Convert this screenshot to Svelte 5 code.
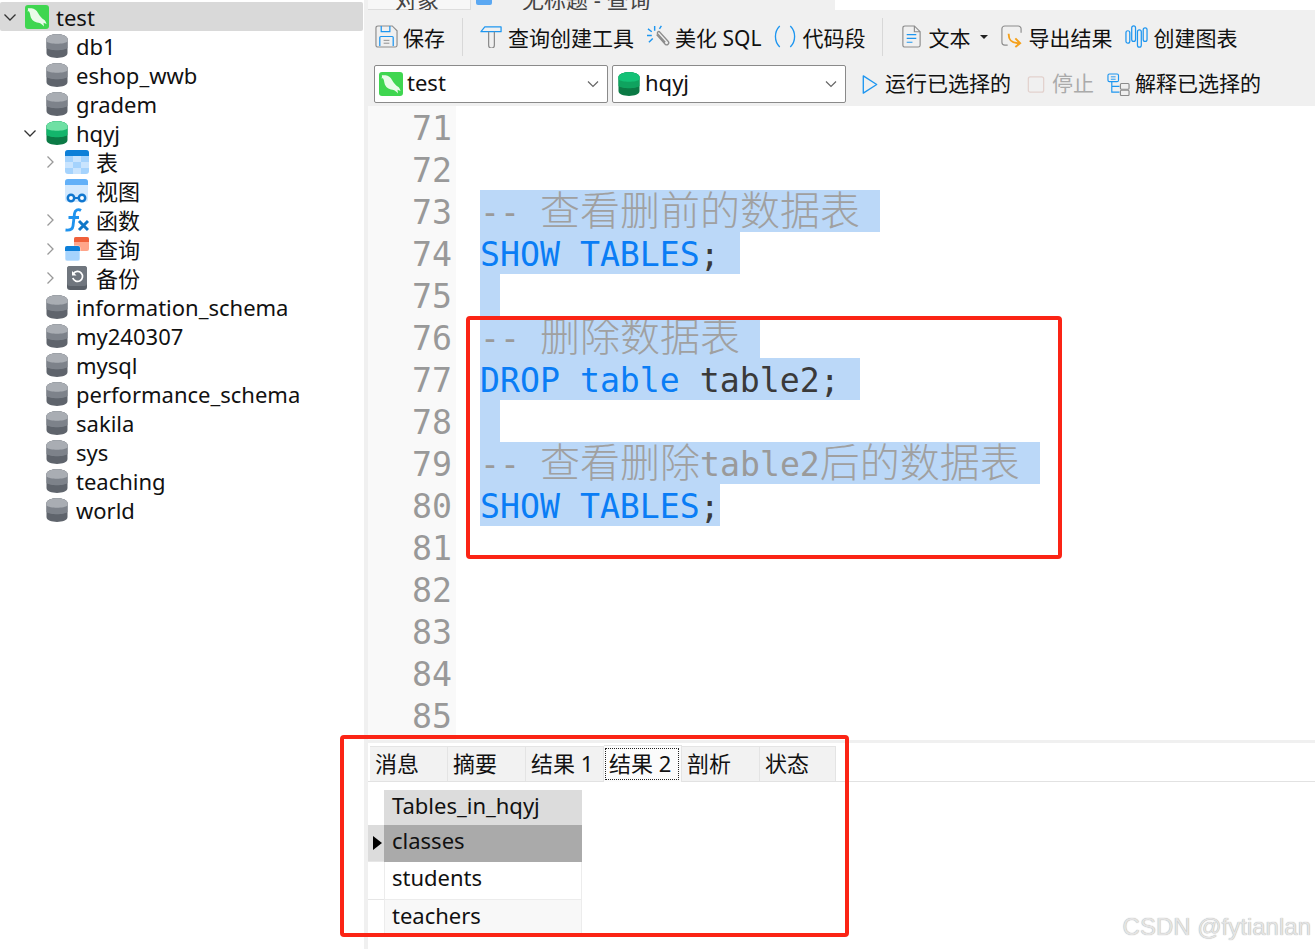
<script>
  const tree = [
    { name: 'test', depth: 0, icon: 'conn', arrow: 'open', selected: true },
    { name: 'db1', depth: 1, icon: 'db' },
    { name: 'eshop_wwb', depth: 1, icon: 'db' },
    { name: 'gradem', depth: 1, icon: 'db' },
    { name: 'hqyj', depth: 1, icon: 'dbon', arrow: 'open' },
    { name: '表', depth: 2, icon: 'table', arrow: 'shut' },
    { name: '视图', depth: 2, icon: 'view' },
    { name: '函数', depth: 2, icon: 'fx', arrow: 'shut' },
    { name: '查询', depth: 2, icon: 'query', arrow: 'shut' },
    { name: '备份', depth: 2, icon: 'backup', arrow: 'shut' },
    { name: 'information_schema', depth: 1, icon: 'db' },
    { name: 'my240307', depth: 1, icon: 'db' },
    { name: 'mysql', depth: 1, icon: 'db' },
    { name: 'performance_schema', depth: 1, icon: 'db' },
    { name: 'sakila', depth: 1, icon: 'db' },
    { name: 'sys', depth: 1, icon: 'db' },
    { name: 'teaching', depth: 1, icon: 'db' },
    { name: 'world', depth: 1, icon: 'db' }
  ];

  const lines = [
    { n: 71 },
    { n: 72 },
    { n: 73, parts: [['c', '-- '], ['z', '查看删前的数据表'], ['c', ' ']] },
    { n: 74, parts: [['k', 'SHOW TABLES'], ['i', '; ']] },
    { n: 75, parts: [['i', ' ']] },
    { n: 76, parts: [['c', '-- '], ['z', '删除数据表'], ['c', ' ']] },
    { n: 77, parts: [['k', 'DROP table '], ['i', 'table2; ']] },
    { n: 78, parts: [['i', ' ']] },
    { n: 79, parts: [['c', '-- '], ['z', '查看删除'], ['c', 'table2'], ['z', '后的数据表'], ['c', ' ']] },
    { n: 80, parts: [['k', 'SHOW TABLES'], ['i', ';']] },
    { n: 81 },
    { n: 82 },
    { n: 83 },
    { n: 84 },
    { n: 85 }
  ];

  const tabs = ['消息', '摘要', '结果 1', '结果 2', '剖析', '状态'];
  const rows = ['classes', 'students', 'teachers'];
</script>

{#snippet dolphin()}
  <svg class="ico" viewBox="0 0 24 24">
    <rect width="24" height="24" rx="3" fill="#3fd650" />
    <path d="M2.500 3c1.500.5 2.500.2 4 .3 3 .2 5 2 6.500 4.700 1.500 2.700 3.500 5.200 6 6.700 1 .6 2 2 2.500 4.300l-3-1.300.5 3.800c-1.500-1.800-3-3.300-5.500-3.800-4-.7-7-2.500-8-6.500-.5-2-.5-4-2-5.500 0 1-.5 1-1 .5.500-.5.500-1.500.5-2.700z" fill="#e9fbe9" />
  </svg>
{/snippet}

{#snippet cylinder(a, b, c)}
  <svg class="ico" viewBox="0 0 24 24">
    <path d="M1.500 5c0-6.500 21-6.500 21 0v14c0 6.500-21 6.500-21 0z" fill={c} />
    <path d="M1.500 5c0-6.500 21-6.500 21 0v9c-3 3-18 3-21 0z" fill={b} />
    <path d="M1.500 5c0-6.500 21-6.500 21 0v2.500c-3 3-18 3-21 0z" fill={a} />
  </svg>
{/snippet}

{#snippet treeIcon(kind)}
  {#if kind === 'conn'}
    {@render dolphin()}
  {:else if kind === 'db'}
    {@render cylinder('#a9adb3', '#7d828a', '#5f646c')}
  {:else if kind === 'dbon'}
    {@render cylinder('#6fe0a4', '#13b56b', '#0b7a45')}
  {:else if kind === 'table'}
    <svg class="ico" viewBox="0 0 24 24">
      <rect width="24" height="24" rx="3" fill="#a5d3fd" />
      <path d="M0 3a3 3 0 0 1 3-3h18a3 3 0 0 1 3 3v3H0z" fill="#0d7fd8" />
      <rect x="8" y="6" width="8" height="6" fill="#c9e4fe" />
      <rect x="0" y="12" width="8" height="6" fill="#c9e4fe" />
      <rect x="16" y="12" width="8" height="6" fill="#c9e4fe" />
      <rect x="8" y="18" width="8" height="6" fill="#c9e4fe" />
    </svg>
  {:else if kind === 'view'}
    <svg class="ico" viewBox="0 0 24 24">
      <rect x="0" y="0" width="23" height="23" rx="3" fill="#d3e9fe" />
      <path d="M0 3a3 3 0 0 1 3-3h17a3 3 0 0 1 3 3v3H0z" fill="#62b0f8" />
      <circle cx="6" cy="19" r="3.200" fill="#fff" stroke="#1077cf" stroke-width="2.500" />
      <circle cx="17" cy="19" r="3.200" fill="#fff" stroke="#1077cf" stroke-width="2.500" />
      <path d="M9 19h5" stroke="#1077cf" stroke-width="2" />
    </svg>
  {:else if kind === 'fx'}
    <svg class="ico" viewBox="0 0 24 24">
      <path d="M16 2.500c-3-2-6-.5-6.500 3L8 18c-.4 3-3 4.500-7.500 4M3.500 9.500H14" fill="none" stroke="#1f93ee" stroke-width="2.800" />
      <path d="M14 13l9 9M23 13l-9 9" fill="none" stroke="#1078c8" stroke-width="3" />
    </svg>
  {:else if kind === 'query'}
    <svg class="ico" viewBox="0 0 24 24">
      <rect x="9" y="0" width="15" height="14" rx="2" fill="#ffa58a" />
      <path d="M9 2a2 2 0 0 1 2-2h11a2 2 0 0 1 2 2v3H9z" fill="#f0603a" />
      <rect x="0" y="9" width="15" height="15" rx="2" fill="#a5d3fd" stroke="#fff" stroke-width=".6" />
      <path d="M0 11a2 2 0 0 1 2-2h11a2 2 0 0 1 2 2v3H0z" fill="#0d7fd8" />
    </svg>
  {:else if kind === 'backup'}
    <svg class="ico" viewBox="0 0 24 24">
      <rect x="2" y="0" width="20" height="24" rx="3" fill="#5a6068" />
      <rect x="2" y="0" width="20" height="20" rx="3" fill="#70767e" />
      <path d="M8.500 7.500a5 5 0 1 1-.7 4.500" fill="none" stroke="#fff" stroke-width="1.700" />
      <path d="M7 5v4.500h4.500z" fill="#fff" />
    </svg>
  {/if}
{/snippet}

<div class="app">
  <aside class="side">
    {#each tree as item}
      <div class="node d{item.depth}" class:selected={item.selected}>
        <span class="arrow">
          {#if item.arrow === 'open'}
            <svg viewBox="0 0 14 14" width="14" height="14"><path d="M1.500 4.500L7 10l5.500-5.500" fill="none" stroke="#333" stroke-width="1.300" /></svg>
          {:else if item.arrow === 'shut'}
            <svg viewBox="0 0 14 14" width="14" height="14"><path d="M4.500 1.500L10 7l-5.500 5.500" fill="none" stroke="#999" stroke-width="1.300" /></svg>
          {/if}
        </span>
        {@render treeIcon(item.icon)}
        <span class="label">{item.name}</span>
      </div>
    {/each}
  </aside>

  <main class="main">
    <div class="tabstrip">
      <div class="doc first"><span>对象</span></div>
      <div class="doc second">
        <svg width="16" height="5" viewBox="0 0 16 5"><path d="M0 0h16v3a2 2 0 0 1-2 2H2a2 2 0 0 1-2-2z" fill="#5ba8f2" /></svg>
        <span>无标题 - 查询</span>
      </div>
    </div>

    <div class="toolbar">
      <div class="bar one">
        <button class="tool">
          <svg class="t" viewBox="0 0 24 24"><path d="M3 1h15l5 5v15a2 2 0 0 1-2 2H3a2 2 0 0 1-2-2V3a2 2 0 0 1 2-2z" fill="none" stroke="#8c8c8c" stroke-width="1.200" /><path d="M6.500 1v6h9V1M5 22v-9a1 1 0 0 1 1-1h12a1 1 0 0 1 1 1v9" fill="none" stroke="#1e96f0" stroke-width="1.300" /><path d="M9 16h6M9 19h6" stroke="#8c8c8c" /></svg>
          保存
        </button>
        <i class="sep"></i>
        <button class="tool">
          <svg class="t" viewBox="0 0 24 24"><path d="M5 2h17v5H1z" fill="none" stroke="#1e96f0" stroke-width="1.300" stroke-linejoin="round" /><path d="M9 7v14a3 3 0 0 0 6 0V7" fill="none" stroke="#8c8c8c" stroke-width="1.300" /></svg>
          查询创建工具
        </button>
        <button class="tool">
          <svg class="t" viewBox="0 0 24 24"><path d="M10 10l9 10a2 2 0 0 0 3-3l-9-10a1.500 1.500 0 0 0-2 2l8 9" fill="none" stroke="#8c8c8c" stroke-width="1.400" /><path d="M8 1v5M1 4l4 3M0 11h5M2 18l4-4M15 1l-2 3" fill="none" stroke="#1e96f0" stroke-width="1.500" /></svg>
          美化 SQL
        </button>
        <button class="tool">
          <svg class="t" viewBox="0 0 24 24"><path d="M6 1C0 7 0 17 6 23M17 1c6 6 6 16 0 22" fill="none" stroke="#1e96f0" stroke-width="1.400" /></svg>
          代码段
        </button>
        <i class="sep"></i>
        <button class="tool">
          <svg class="t" viewBox="0 0 24 24"><path d="M5 1h10l6 6v14a2 2 0 0 1-2 2H5a2 2 0 0 1-2-2V3a2 2 0 0 1 2-2zM15 1v6h6" fill="none" stroke="#8c8c8c" stroke-width="1.200" /><path d="M7 10h10M7 14h10M7 18h6" stroke="#1e96f0" stroke-width="1.300" /></svg>
          文本
        </button>
        <i class="caret"></i>
        <button class="tool">
          <svg class="t" viewBox="0 0 24 24"><path d="M22 8V4a3 3 0 0 0-3-3H5a3 3 0 0 0-3 3v14a3 3 0 0 0 3 3h3" fill="none" stroke="#8c8c8c" stroke-width="1.200" /><path d="M9 9c0 6 2 10 11 10M16 14l5 5-5 4" fill="none" stroke="#f5a11c" stroke-width="2" /></svg>
          导出结果
        </button>
        <button class="tool">
          <svg class="t" viewBox="0 0 24 24"><rect x="1" y="6" width="4" height="13" rx="2" fill="none" stroke="#1e96f0" stroke-width="1.300" /><rect x="7" y="1" width="4" height="16" rx="2" fill="none" stroke="#1e96f0" stroke-width="1.300" /><rect x="13" y="5" width="4" height="18" rx="2" fill="none" stroke="#1e96f0" stroke-width="1.300" /><rect x="19" y="3" width="4" height="14" rx="2" fill="none" stroke="#1e96f0" stroke-width="1.300" /></svg>
          创建图表
        </button>
      </div>

      <div class="bar two">
        <div class="select">
          {@render dolphin()}
          <span>test</span>
          <svg class="down" viewBox="0 0 12 12"><path d="M1 3.500L6 8.500l5-5" fill="none" stroke="#666" stroke-width="1.200" /></svg>
        </div>
        <div class="select">
          {@render cylinder('#13c176', '#0fa35f', '#0b7a45')}
          <span>hqyj</span>
          <svg class="down" viewBox="0 0 12 12"><path d="M1 3.500L6 8.500l5-5" fill="none" stroke="#666" stroke-width="1.200" /></svg>
        </div>
        <button class="tool run">
          <svg class="t play" viewBox="0 0 18 24"><path d="M2 3l14 9-14 9z" fill="none" stroke="#1e96f0" stroke-width="1.400" stroke-linejoin="round" /></svg>
          运行已选择的
        </button>
        <button class="tool stop">
          <svg class="t play" viewBox="0 0 18 24"><rect x="1" y="4" width="16" height="16" rx="2" fill="none" stroke="#e2d1cd" stroke-width="1.300" /></svg>
          停止
        </button>
        <button class="tool">
          <svg class="t" viewBox="0 0 24 24"><rect x="1" y="1" width="11" height="8" rx="1.500" fill="none" stroke="#1e96f0" stroke-width="1.200" /><path d="M4 4h5M4 6.500h5" stroke="#1e96f0" /><path d="M5 9v11h8M5 14h8" fill="none" stroke="#1e96f0" stroke-width="1.200" /><rect x="14" y="11" width="9" height="6" rx="1" fill="none" stroke="#8c8c8c" stroke-width="1.200" /><rect x="14" y="18" width="9" height="5.500" rx="1" fill="none" stroke="#8c8c8c" stroke-width="1.200" /></svg>
          解释已选择的
        </button>
      </div>
    </div>

    <div class="editor">
      {#each lines as line}
        <div class="line">
          <span class="num">{line.n}</span>
          {#if line.parts}
            <span class="sel">{#each line.parts as [kind, text]}<span class={kind}>{text}</span>{/each}</span>
          {/if}
        </div>
      {/each}
    </div>

    <div class="results">
      <div class="tabs">
        {#each tabs as tab, i}
          <div class="tab" class:active={i === 3}><span>{tab}</span></div>
        {/each}
      </div>
      <div class="grid">
        <div class="corner"></div>
        <div class="head">Tables_in_hqyj</div>
        {#each rows as row, i}
          <div class="mark" class:current={i === 0}></div>
          <div class="cell" class:picked={i === 0} class:odd={i === 2}>{row}</div>
        {/each}
      </div>
    </div>
  </main>

  <div class="callout code"></div>
  <div class="callout res"></div>
  <div class="watermark">CSDN @fytianlan</div>
</div>

<style>
  :global(body) {
    background: #fff;
  }

  .app {
    display: flex;
    position: relative;
    width: 1315px;
    height: 949px;
    overflow: hidden;
    font-family: "Noto Sans", "Noto Sans CJK SC", sans-serif;
    font-size: 22px;
    color: #111;
  }

  .side {
    width: 368px;
    flex: none;
    padding-top: 2px;
    box-sizing: border-box;
    border-right: 4px solid #f0f0f0;
  }

  .node {
    display: flex;
    align-items: center;
    height: 29px;
    margin-right: 1px;
    border-radius: 2px;
  }

  .node.selected {
    background: #d9d9d9;
  }

  .d1 {
    padding-left: 20px;
  }

  .d2 {
    padding-left: 40px;
  }

  .arrow {
    display: flex;
    justify-content: center;
    width: 20px;
  }

  .ico {
    width: 24px;
    height: 24px;
    flex: none;
    margin-left: 5px;
  }

  .label {
    margin-left: 7px;
    padding-top: 2px;
    line-height: 29px;
    white-space: nowrap;
  }

  .main {
    flex: 1;
    min-width: 0;
    display: flex;
    flex-direction: column;
  }

  .tabstrip {
    display: flex;
    height: 10px;
    overflow: hidden;
    background: #fff;
    font-size: 22px;
    line-height: 14px;
    color: #444;
  }

  .doc {
    display: flex;
    height: 10px;
    box-sizing: border-box;
  }

  .doc span {
    margin-top: -8px;
    white-space: nowrap;
  }

  .first {
    width: 103px;
    padding-left: 27px;
    background: #f7f7f7;
    border-right: 1px solid #ddd;
    border-bottom: 1px solid #ddd;
  }

  .second {
    gap: 30px;
    width: 364px;
    padding-left: 5px;
    background: #f0f0f0;
  }

  .toolbar {
    background: #f0f0f0;
    height: 96px;
    flex: none;
    font-size: 21px;
  }

  .bar {
    display: flex;
    align-items: center;
  }

  .one {
    height: 53px;
    padding-left: 7px;
    gap: 13px;
  }

  .two {
    height: 42px;
    padding-left: 6px;
    gap: 4px;
  }

  .tool {
    display: flex;
    align-items: center;
    gap: 5px;
    padding: 0;
    border: none;
    background: none;
    color: #111;
    font: inherit;
    white-space: nowrap;
  }

  .two .tool {
    padding-bottom: 4px;
  }

  .t {
    width: 23px;
    height: 23px;
    flex: none;
  }

  .two .t {
    margin-bottom: -4px;
  }

  .play {
    width: 18px;
  }

  .sep {
    width: 1px;
    height: 38px;
    margin: 0 4px;
    background: #d8d8d8;
  }

  .caret {
    width: 0;
    height: 0;
    margin: 0 -1px 0 -3px;
    border: 4px solid transparent;
    border-top: 4px solid #222;
    border-bottom: none;
  }

  .select {
    display: flex;
    align-items: center;
    width: 234px;
    height: 38px;
    padding-right: 8px;
    box-sizing: border-box;
    background: #fff;
    border: 1px solid #8a8a8a;
    border-radius: 2px;
    font-size: 22px;
  }

  .select .ico {
    margin-left: 4px;
  }

  .select span {
    flex: 1;
    margin-left: 4px;
    padding-bottom: 4px;
  }

  .down {
    width: 12px;
    height: 12px;
  }

  .run {
    margin-left: 11px;
    gap: 6px;
  }

  .stop {
    margin-left: 12px;
    gap: 7px;
    color: #aaa !important;
  }

  .stop + .tool {
    margin-left: 9px;
  }

  .editor {
    height: 634px;
    flex: none;
    overflow: hidden;
    background: linear-gradient(to right, #f9f9f9 88px, #fff 88px);
    font-family: "DejaVu Sans Mono", monospace;
    font-size: 33.2px;
    color: #333;
  }

  .line {
    display: flex;
    height: 42px;
    line-height: 46px;
  }

  .num {
    flex: none;
    width: 84px;
    margin-right: 28px;
    text-align: right;
    color: #999;
  }

  .sel {
    display: inline-block;
    height: 42px;
    background: #bbd8f8;
    white-space: pre;
  }

  .sel span {
    display: inline-block;
    height: 42px;
    vertical-align: top;
  }

  .k {
    color: #0a7df5;
  }

  .i {
    color: #3a3a3a;
  }

  .c,
  .z {
    color: #9a9a9a;
  }

  .z {
    font-family: "Noto Sans CJK SC", sans-serif;
    font-size: 40px;
    font-weight: 300;
    color: #a0a0a0;
    line-height: 36px;
  }

  .results {
    flex: 1;
    border-top: 3px solid #f0f0f0;
    padding-top: 2px;
  }

  .tabs {
    display: flex;
    align-items: flex-end;
    height: 36px;
    padding-left: 2px;
    border-bottom: 1px solid #e2e2e2;
  }

  .tab {
    width: 78px;
    height: 35px;
    box-sizing: border-box;
    padding-left: 5px;
    background: #f2f2f2;
    border: 1px solid #e4e4e4;
    border-bottom: none;
    border-left: none;
    line-height: 33px;
  }

  .tab:last-child {
    width: 76px;
  }

  .tab.active {
    height: 37px;
    background: #fbfbfb;
    margin-bottom: -1px;
  }

  .tab.active span {
    display: block;
    height: 32px;
    margin: 2px 2px 0 -4px;
    padding-left: 4px;
    line-height: 30px;
    outline: 1px dotted #222;
    outline-offset: -1px;
  }

  .grid {
    display: grid;
    grid-template-columns: 16px 198px;
    grid-template-rows: 35px 37px 38px 36px;
    margin-top: 8px;
  }

  .head {
    background: #dcdcdc;
    padding-left: 8px;
    line-height: 30px;
  }

  .mark {
    position: relative;
    border-bottom: 1px solid #e6e6e6;
    box-sizing: border-box;
  }

  .mark.current {
    background: #dcdcdc;
  }

  .mark.current::after {
    content: "";
    position: absolute;
    top: 11px;
    left: 5px;
    border: 7px solid transparent;
    border-left: 9px solid #000;
    border-right: none;
  }

  .cell {
    padding-left: 7px;
    line-height: 30px;
    box-sizing: border-box;
    border-bottom: 1px solid #ececec;
    border-right: 1px solid #ececec;
    border-left: 1px solid #ececec;
  }

  .cell.picked {
    background: #aaa;
    border-color: #aaa;
  }

  .cell.odd {
    background: #f8f8f8;
  }

  .callout {
    position: absolute;
    box-sizing: border-box;
    border: 4px solid #fb2415;
    border-radius: 4px;
    pointer-events: none;
  }

  .code {
    left: 466px;
    top: 316px;
    width: 596px;
    height: 243px;
  }

  .res {
    left: 340px;
    top: 735px;
    width: 509px;
    height: 202px;
  }

  .watermark {
    position: absolute;
    right: 4px;
    bottom: 8px;
    font-family: "Liberation Sans", sans-serif;
    font-size: 24px;
    color: #e4e4e4;
    text-shadow: 0 0 1px #999;
  }
</style>
